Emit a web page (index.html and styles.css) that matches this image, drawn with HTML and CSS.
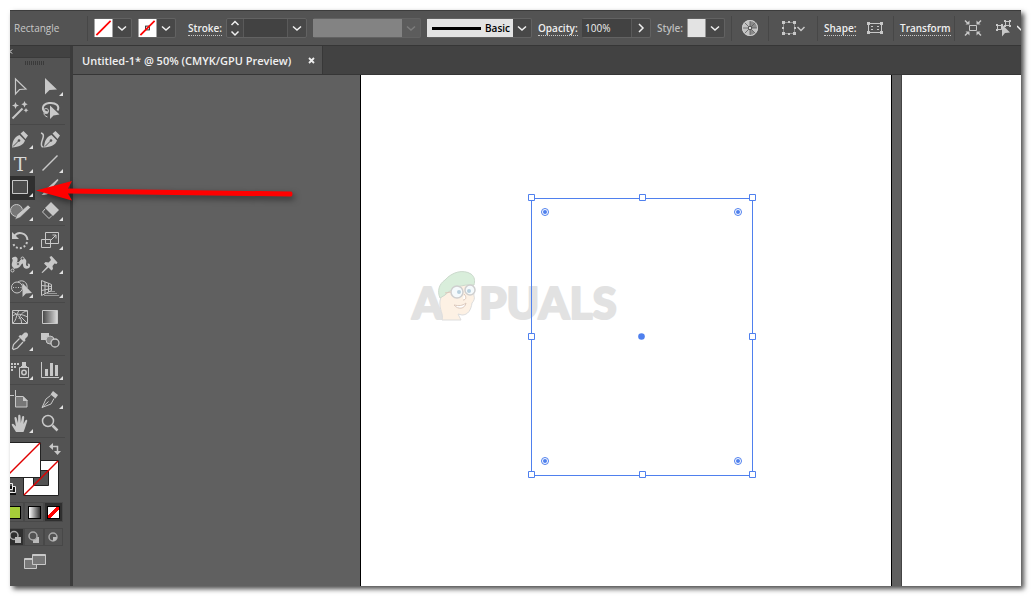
FILE: index.html
```html
<!DOCTYPE html>
<html lang="en">
<head>
<meta charset="UTF-8" />
<meta name="viewport" content="width=device-width, initial-scale=1" />
<title>Untitled-1* @ 50% (CMYK/GPU Preview)</title>
<link rel="stylesheet" href="styles.css">
</head>
<body>

<div class="app">
  <header class="control-bar">
    <span class="object-type">Rectangle</span>
    <span class="sep"></span>

    <button class="combo" aria-label="Fill">
      <svg class="swatch" viewBox="0 0 19 19"><rect width="19" height="19" fill="#fff"/><path d="M2 17L17 2" stroke="#f00" stroke-width="1.8"/></svg>
      <svg class="chev" viewBox="0 0 18 18"><path d="M5 7.5l4 3.5 4-3.5"/></svg>
    </button>
    <button class="combo" aria-label="Stroke color">
      <svg class="swatch" viewBox="0 0 19 19"><rect width="19" height="19" fill="#fff"/><rect x="7.5" y="7.5" width="4" height="4" fill="none" stroke="#222"/><path d="M2 17L17 2" stroke="#f00" stroke-width="1.8"/></svg>
      <svg class="chev" viewBox="0 0 18 18"><path d="M5 7.5l4 3.5 4-3.5"/></svg>
    </button>

    <span class="label-cell stroke-label"><a href="#">Stroke:</a></span>
    <div class="combo stroke-weight">
      <button class="part" aria-label="Step stroke weight"><svg class="chev" viewBox="0 0 18 18"><path d="M4.5 6L8 2.500l3.500 3.500M4.500 12.500l3.500 3.500 3.500-3.500"/></svg></button>
      <input type="text" aria-label="Stroke weight">
      <button class="part" aria-label="Stroke weight list"><svg class="chev" viewBox="0 0 18 18"><path d="M5 7.500l4 3.500 4-3.500"/></svg></button>
    </div>
    <button class="combo profile" aria-label="Width profile" disabled>
      <span class="profile-box"></span>
      <svg class="chev" viewBox="0 0 18 18"><path d="M5 7.500l4 3.500 4-3.500"/></svg>
    </button>
    <button class="combo brush">
      <span class="brush-box"><i></i>Basic</span>
      <svg class="chev" viewBox="0 0 18 18"><path d="M5 7.500l4 3.500 4-3.500"/></svg>
    </button>

    <span class="label-cell opacity-label"><a href="#">Opacity:</a></span>
    <div class="combo opacity">
      <input type="text" value="100%" aria-label="Opacity">
      <button class="part" aria-label="Opacity slider"><svg class="chev" viewBox="0 0 18 18"><path d="M7 5l4 4-4 4"/></svg></button>
    </div>

    <span class="label-cell style-label">Style:</span>
    <button class="combo" aria-label="Graphic style">
      <svg class="swatch" viewBox="0 0 19 19"><rect width="19" height="19" fill="#e3e3e3"/></svg>
      <svg class="chev" viewBox="0 0 18 18"><path d="M5 7.500l4 3.500 4-3.500"/></svg>
    </button>
    <span class="sep"></span>

    <button class="icon-btn" aria-label="Recolor artwork">
      <svg width="18" height="18" viewBox="0 0 18 18"><circle cx="9" cy="9" r="8" fill="#c2c2c2"/><path d="M9 1a8 8 0 0 1 8 8H9zM9 9v8a8 8 0 0 0 5.700-2.300z" fill="#8b8b8b"/><path d="M9 1v16M1 9h16M3.300 3.300l11.400 11.400M14.700 3.300L3.300 14.700" stroke="#5b5b5b" stroke-width=".8"/><circle cx="9" cy="9" r="7.500" fill="none" stroke="#cfcfcf"/><circle cx="9" cy="9" r="1.700" fill="#ddd" stroke="#555"/></svg>
    </button>
    <span class="sep"></span>
    <button class="icon-btn wide" aria-label="Align to">
      <svg width="26" height="18" viewBox="0 0 26 18" fill="none" stroke="#c8c8c8"><path d="M3.500 3.500h11v11h-11z" stroke-dasharray="1 1"/><path d="M2 2h3v3H2zM8 2h2v2H8zM13 2h3v3h-3zM2 13h3v3H2zM8 14h2v2H8zM13 13h3v3h-3zM2 8h2v2H2zM14 8h2v2h-2z" fill="#c8c8c8" stroke="none"/><path d="M17.500 8l3.500 3.500L24.500 8" stroke-width="1.500"/></svg>
    </button>
    <span class="sep"></span>

    <span class="label-cell shape-label"><a href="#">Shape:</a></span>
    <button class="icon-btn" aria-label="Shape properties">
      <svg width="18" height="16" viewBox="0 0 18 16" fill="none" stroke="#c8c8c8"><path d="M2.500 3.500h13v9h-13z"/><path d="M1 2h3v3H1zM14 2h3v3h-3zM1 11h3v3H1zM14 11h3v3h-3zM5 6h2v1H5zM11 6h2v1h-2zM5 9h2v1H5zM11 9h2v1h-2z" fill="#c8c8c8" stroke="none"/></svg>
    </button>
    <span class="sep"></span>
    <span class="label-cell transform-label"><a href="#">Transform</a></span>
    <span class="sep"></span>
    <button class="icon-btn" aria-label="Isolate selected object">
      <svg width="18" height="18" viewBox="0 0 18 18" fill="none" stroke="#c8c8c8"><path d="M5.500 6.500h7v5h-7z"/><path d="M1 1.500l3 3M17 1.500l-3 3M1 16.500l3-3M17 16.500l-3-3" stroke-width="1.500"/><path d="M1.500 5.500h4V1.500zM16.500 5.500h-4V1.500zM1.500 12.500h4v4zM16.500 12.500h-4v4z" fill="#c8c8c8" stroke="none"/></svg>
    </button>
    <button class="icon-btn" aria-label="Select similar objects">
      <svg width="18" height="18" viewBox="0 0 18 18" fill="none" stroke="#c8c8c8"><path d="M11.500 2.500h4v4h-4zM3.500 6.500h4v4h-4z"/><path d="M10 1h2v2h-2zM15 1h2v2h-2zM15 6h2v2h-2zM10 6h2v2h-2zM2 5h2v2H2zM7 5h2v2H7zM2 10h2v2H2z" fill="#c8c8c8" stroke="none"/><path d="M8 5.500v12l3-3.500 5-.5z" fill="#c8c8c8" stroke="none"/></svg>
    </button>
    <svg class="chev last" viewBox="0 0 18 18"><path d="M0 7l4 4 4-4"/></svg>
  </header>

  <div class="workspace">
    <aside class="tools">
      <div class="tools-head"><svg width="4" height="11" viewBox="0 0 4 11"><path d="M2 3.500L0 5.500l2 2" fill="none" stroke="#eee"/></svg></div>
      <div class="grip"></div>

      <div class="tool-group">
        <button aria-label="Selection"><svg viewBox="0 0 30 24"><path class="ln" d="M10.500 4v15l4-4.500 6.500-.5z" stroke-width="1.200"/></svg></button>
        <button class="more" aria-label="Direct selection"><svg viewBox="0 0 30 24"><path d="M10 3v16.500l4.500-4.500 7.500-.5z"/></svg></button>
        <button aria-label="Magic wand"><svg viewBox="0 0 30 24"><path class="ln thick" d="M7.500 19.500l10-10"/><path d="M10.500 3l1 2.500 2.500 1-2.500 1-1 2.500-1-2.500-2.500-1 2.500-1zM19.500 2l1 2.200 2.200 1-2.200 1-1 2.200-1-2.200-2.200-1 2.200-1zM21 9l.8 1.500 1.700.8-1.700.8-.8 1.700-.8-1.700-1.700-.8 1.700-.8z"/></svg></button>
        <button aria-label="Lasso"><svg viewBox="0 0 30 24"><path class="ln thick" d="M13 13.500c-7-1-7-8 1-9.500 7-.8 11 3 8.500 7.500"/><circle class="ln" cx="11" cy="12" r="2.500"/><path class="ln" d="M9 14c0 2 1 3 3.500 4"/><path d="M15 6.500V20l3.500-3.500 6-1z"/></svg></button>
      </div>

      <div class="tool-group">
        <button class="more" aria-label="Pen"><svg viewBox="0 0 30 24"><path d="M7 19.500C7.500 13 9.500 8.500 14.500 7l5.500 5.500C18.500 17 14 19 7 19.500zM15.500 5.500L18.500 3l4.500 4.500-2.500 3.500z"/><path class="cut" d="M8 18.500l5.500-5.500"/><circle class="hole" cx="14" cy="12.500" r="1.300"/></svg></button>
        <button aria-label="Curvature"><svg viewBox="0 0 30 24"><path class="ln" d="M6 5c4 1 2 5 1 8s-1 6 1.500 6" stroke-width="1.500"/><path d="M9 19.500C9.500 13 11.500 8.500 16.500 7l5.500 5.500C20.500 17 16 19 9 19.500zM17.500 5.500l3-2.500L25 7.500 22.500 11z"/><path class="cut" d="M10 18.500l5.500-5.500"/><circle class="hole" cx="16" cy="12.500" r="1.300"/></svg></button>
        <button class="more type" aria-label="Type">T</button>
        <button class="more" aria-label="Line segment"><svg viewBox="0 0 30 24"><path class="ln" d="M7.500 18.500l15-15" stroke-width="1.500"/></svg></button>
        <button class="more active" aria-label="Rectangle"><svg viewBox="0 0 30 24"><path class="ln" d="M7.500 4.500h15v13h-15z" fill="#4b4b4b"/></svg></button>
        <button class="more" aria-label="Paintbrush"><svg viewBox="0 0 30 24"><path d="M22.500 3l1 1-8.500 10.500-2.500-2.500zM12 13l2.500 2.500c-1 3-4 3.500-8 3.500 3-1.500 2-5 5.500-6z"/></svg></button>
        <button class="more" aria-label="Shaper"><svg viewBox="0 0 30 24"><circle class="ln" cx="11.500" cy="10.500" r="6" fill="#777"/><path d="M23 5l2.500 2.500L15 17.500 10 19.500l2-5z" stroke="#535353" stroke-width=".5"/></svg></button>
        <button class="more" aria-label="Eraser"><svg viewBox="0 0 30 24"><path d="M16 2l8 8-6 6-8-8z"/><path class="ln" d="M10 9l-2.500 3 6.500 6.500 3-3"/></svg></button>
      </div>

      <div class="tool-group">
        <button class="more" aria-label="Rotate"><svg viewBox="0 0 30 24"><path class="ln thick" d="M9 7.500c4-6 13-3.500 13.500 3.500"/><path class="ln thick" d="M22 13c-2 8-12 8-14 1" stroke-dasharray="2 2"/><path d="M7 3v7h7z"/></svg></button>
        <button class="more" aria-label="Scale"><svg viewBox="0 0 30 24"><path class="ln" d="M10.500 3.500h13v11h-13zM6.500 10.500h9v8h-9zM16 11l5-5M17.500 6h3.500v3.500"/></svg></button>
        <button class="more" aria-label="Width"><svg viewBox="0 0 30 24"><path d="M7 5c4-3 7 0 5 4-1 2 1 3 2 1 1-4 5-6 7-3 1 2-1 5 1 6 2 0 1-2 0-2 3-2 4 2 2 4-3 2-6 0-6-3 0-2-1-2-2 0-2 4-7 5-9 1-1-3 2-6 0-7z"/><path class="ln" d="M7.500 17.500L17 6"/><circle class="ln hole" cx="7.500" cy="17.500" r="1.500"/><circle class="ln hole" cx="17.500" cy="5.500" r="1.500"/><circle class="ln hole" cx="13" cy="11" r="1.500"/></svg></button>
        <button class="more" aria-label="Puppet warp"><svg viewBox="0 0 30 24"><path d="M14.500 4l2-1 6 6.500-1 1.500-2-.5-2 2.500.5 3-1.500 1.500-3-3-6 5.500-1-.5 5.500-6-3-3 1.500-1.500 3 .5 2.500-2.500z"/></svg></button>
        <button class="more" aria-label="Shape builder"><svg viewBox="0 0 30 24"><circle class="ln" cx="12" cy="10.500" r="5.500"/><path class="ln" d="M13 5c4-3 10 0 9 6"/><path class="ln" d="M8 10.500h9" stroke-dasharray="1 1.500"/><path d="M17.500 6v14l3.500-3.500 6-.5z"/></svg></button>
        <button class="more" aria-label="Perspective grid"><svg viewBox="0 0 30 24"><path class="ln" d="M6.500 3.500v15M6.500 3.500l10 4v6l-10 5M10 5v12M13.500 6.500v8.500M6.500 8.500l10 1M6.500 13.500l10-2"/><path d="M14 14h6v1h-6zM12 16h10v1H12zM9 18h15v1H9z" opacity=".6"/></svg></button>
      </div>

      <div class="tool-group">
        <button aria-label="Mesh"><svg viewBox="0 0 30 24"><path class="ln" d="M7.500 4.500h15v13h-15zM7.500 10c4-3 9-2 15 1M8 6c4 2 9 6 8.500 11M14 4.500c-3 4-2 9-6 12.500M22 5c-5 1-7 4-8 8M16 11l6 6"/></svg></button>
        <button aria-label="Gradient"><svg viewBox="0 0 30 24"><defs><linearGradient id="gt"><stop offset="0" stop-color="#444"/><stop offset="1" stop-color="#ddd"/></linearGradient></defs><path class="ln" d="M7.500 4.500h15v13h-15z" fill="url(#gt)"/></svg></button>
        <button class="more" aria-label="Eyedropper"><svg viewBox="0 0 30 24"><path d="M19 3c3-1.500 5 1 3.500 3.500L20 9l.5 1.500-1.500 1.500-5.500-5.500L15 5l1.500.5z"/><path class="ln" d="M14.500 8.500l-6 6-1 4 1 1 4-1.500 5.500-6" stroke-width="1.200"/></svg></button>
        <button aria-label="Blend"><svg viewBox="0 0 30 24"><path d="M6 3h8v7H6z"/><circle class="ln" cx="15" cy="10" r="4" fill="#888"/><circle class="ln" cx="20" cy="13" r="4" fill="#535353" stroke-width="1.300"/></svg></button>
      </div>

      <div class="tool-group">
        <button class="more" aria-label="Symbol sprayer"><svg viewBox="0 0 30 24"><path d="M6 4h2v2H6zM9 4h2v2H9zM12 4h2v2h-2zM6 7h2v2H6zM9 7h2v2H9zM6 10h2v2H6zM17 3h4v4h-4z"/><path class="ln" d="M14.500 8.500h9v10h-9zM16 7.500h6"/><circle class="ln" cx="19" cy="13.500" r="2.200" stroke-width="1.500"/></svg></button>
        <button class="more" aria-label="Column graph"><svg viewBox="0 0 30 24"><path class="ln" d="M6.500 3v15.500H24"/><path d="M10 10h3v7h-3zM15 4h3v13h-3zM20 6h3v11h-3z"/></svg></button>
      </div>

      <div class="tool-group">
        <button aria-label="Artboard"><svg viewBox="0 0 30 24"><path class="ln" d="M10.500 2v6M4 7.500h5"/><path class="ln" d="M10.500 8.500h7.500l4 4v6.500H10.500z" fill="#777"/><path d="M18 8v5h5z"/></svg></button>
        <button class="more" aria-label="Slice"><svg viewBox="0 0 30 24"><path d="M18 3l5 4-2.500 3.500-5-4z"/><path class="ln" d="M15.500 7.500L11 11l-4 8.500 9-3.500 3-5.500M7 19.500l6.500-6"/></svg></button>
        <button class="more" aria-label="Hand"><svg viewBox="0 0 30 24"><path d="M11 20l-4-6.500c-1-1.500 1-2.500 2-1l2 2-1.500-8c-.2-1.800 1.800-2 2.200-.3L13 11l.2-7c0-1.700 2.200-1.700 2.300 0l.3 7 1.200-6c.4-1.600 2.300-1.200 2.200.4L18.500 12l1.800-3.500c.8-1.200 2.300-.6 1.900.8L20 16l-1.500 4z"/></svg></button>
        <button aria-label="Zoom"><svg viewBox="0 0 30 24"><circle class="ln" cx="13" cy="9" r="5.500" stroke-width="1.500"/><path class="ln" d="M17.500 13.500l5 5" stroke-width="2.500"/></svg></button>
      </div>

      <div class="paint">
        <svg width="60" height="60" viewBox="0 0 60 60" role="img" aria-label="Fill and stroke">
          <path d="M13.500 19.500h35v35h-35zM23.500 29.500h15v15h-15z" fill="#fff" stroke="#222" fill-rule="evenodd"/>
          <path d="M14 54l34-34" stroke="#e00000" stroke-width="1.500"/>
          <path d="M-4.500 1.500h35v35h-35z" fill="#fff" stroke="#222"/>
          <path d="M-4 36l34-34" stroke="#e00000" stroke-width="1.500"/>
          <path d="M42 5.500h5.500V11" fill="none" stroke="#c8c8c8" stroke-width="1.500"/>
          <path d="M43 2v7l-4-3.500zM44 10h7l-3.500 4z" fill="#c8c8c8"/>
          <path d="M0 46.500h4.500v6H-1" fill="none" stroke="#111" stroke-width="3"/>
          <path d="M-2 42.500h4.500v6H-2M2 45.500h3.500v6H-1" fill="none" stroke="#eee"/>
        </svg>
      </div>
      <div class="modes color-modes">
        <button aria-label="Color"><i class="chip lime"></i></button>
        <button aria-label="Gradient"><i class="chip fade"></i></button>
        <button class="active" aria-label="None"><i class="chip none"></i></button>
      </div>
      <div class="modes draw-modes">
        <button class="active" aria-label="Draw normal"><svg viewBox="0 0 18 16"><circle cx="8" cy="6.500" r="4" fill="none" stroke="#aaa" stroke-width="1.500"/><path d="M9 8h6v6H9z" fill="#bbb"/></svg></button>
        <button aria-label="Draw behind"><svg viewBox="0 0 18 16"><path d="M8 8h6v6H8z" fill="#bbb"/><circle cx="8" cy="7" r="4" fill="#535353" stroke="#aaa" stroke-width="1.500"/></svg></button>
        <button aria-label="Draw inside"><svg viewBox="0 0 18 16"><circle cx="8" cy="8" r="4" fill="none" stroke="#aaa" stroke-width="1.500"/><path d="M8 8h4c0 2-1 4-4 4z" fill="#bbb"/></svg></button>
      </div>
      <button class="screen-mode" aria-label="Change screen mode">
        <svg width="24" height="18" viewBox="0 0 24 18" fill="#777" stroke="#c8c8c8"><path d="M1.500 5.500h12v10h-12z"/><path d="M9.500 1.500h13v10h-13z"/><path d="M9 2.500h14M1 6.500h8"/></svg>
      </button>
    </aside>

    <main class="document">
      <nav class="tabs">
        <a class="tab" href="#">Untitled-1* @ 50% (CMYK/GPU Preview)
          <svg width="7" height="7" viewBox="0 0 7 7"><path d="M1 1l5 5M6 1L1 6" stroke="#eee" stroke-width="1.800"/></svg>
        </a>
      </nav>
      <div class="canvas">
        <div class="artboard first">
          <svg class="watermark" width="220" height="64" viewBox="0 0 220 64">
            <g class="wm-text"><text x="7" y="54">A</text><text x="74" y="54">PUALS</text></g>
            <path d="M37 55c2-6-3-10-2-19l3-12c8-8 24-9 30-6l1 13c1 2 0 5-2 7-1 7-4 12-10 12l-4-1 3 6z" fill="#fdf1e4" stroke="#ddd"/>
            <path d="M35 33c-3-7-1-14 5-18C47 7 58 4 66 9c4 3 4 7 3 11-12-1-22 3-29 10z" fill="#d9eedb" stroke="#ccdacd"/>
            <circle cx="52" cy="27" r="6" fill="#f5fafc" stroke="#cfcfcf" stroke-width="1.500"/><circle cx="65" cy="25" r="5" fill="#f5fafc" stroke="#cfcfcf" stroke-width="1.500"/>
            <circle cx="54" cy="27" r="2" fill="#b9d0de"/><circle cx="64" cy="26" r="2" fill="#b9d0de"/>
            <path d="M40 28l6-1M59 29c3 3 2 6-1 6M49 40c5 1 8 1 12-2-1 6-8 7-12 2" fill="#fff" stroke="#dcc9bd"/>
          </svg>
          <svg class="selection" width="228" height="285" viewBox="0 0 228 285">
            <path d="M3.500 4.500h221v277h-221z"/>
            <g fill="#fff">
              <path d="M.5.500h6v6h-6zM111.500.500h6v6h-6zM221.500.500h6v6h-6zM.5 139.500h6v6h-6zM221.500 139.500h6v6h-6zM.5 277.500h6v6h-6zM111.500 277.500h6v6h-6zM221.500 277.500h6v6h-6z"/>
            </g>
            <g>
              <circle cx="17" cy="18" r="3.500"/><circle cx="210" cy="18" r="3.500"/><circle cx="17" cy="267" r="3.500"/><circle cx="210" cy="267" r="3.500"/>
            </g>
            <g class="dot">
              <circle cx="17" cy="18" r="2"/><circle cx="210" cy="18" r="2"/><circle cx="17" cy="267" r="2"/><circle cx="210" cy="267" r="2"/>
              <circle cx="113.500" cy="142.500" r="3.300"/>
            </g>
          </svg>
        </div>
        <div class="artboard second"></div>
      </div>
    </main>
  </div>

  <svg class="pointer" width="270" height="32" viewBox="0 0 270 32">
    <path d="M6 15.500L42 6l-4 7.500 223 3c2 .5 2 4.500 0 5L38 18.500l4 7z" fill="#f00"/>
  </svg>
</div>

</body>
</html>
```
FILE: styles.css
```css
* {
  box-sizing: border-box;
}
body {
  margin: 0;
  padding: 10px 11px 11px 10px;
  height: 100vh;
  background: #fff;
  font-family: "Open Sans", "Noto Sans", sans-serif;
  font-size: 10px;
  color: #f0f0f0;
}
button, input {
  font: inherit;
  color: inherit;
  border: none;
  background: none;
  padding: 0;
  margin: 0;
  min-width: 0;
}
a {
  color: inherit;
  text-decoration: none;
}
svg {
  display: block;
  flex: none;
}
.app {
  position: relative;
  height: 100%;
  display: flex;
  flex-direction: column;
  background: #535353;
  box-shadow: 3px 3px 5px rgba(0,0,0,0.7);
}

/* top control bar */
.control-bar {
  display: flex;
  align-items: center;
  gap: 6px;
  height: 36px;
  padding-left: 4px;
  border-top: 1px solid #3c3c3c;
  border-bottom: 1px solid #363636;
  overflow: hidden;
}
.control-bar > * {
  flex: none;
}
.object-type {
  width: 73px;
  margin-right: -6px;
  color: #c8c8c8;
}
.sep {
  width: 1px;
  height: 25px;
  background: #474747;
}
.combo {
  display: flex;
  height: 20px;
  border: 1px solid #626262;
  border-left: none;
  border-radius: 2px;
  background: #484848;
}
.swatch {
  width: 19px;
  height: 18px;
}
.chev {
  width: 18px;
  height: 18px;
  fill: none;
  stroke: #f0f0f0;
  stroke-width: 1.5;
}
.chev.last {
  margin-left: -4px;
}
.combo input {
  flex: 1;
  background: #424242;
  border-right: 1px solid #5a5a5a;
}
.part {
  flex: none;
}
.stroke-weight {
  width: 81px;
  border-left: 1px solid #626262;
}
.stroke-weight .part:first-child {
  width: 16px;
  overflow: hidden;
}
.stroke-weight input {
  border-left: 1px solid #5a5a5a;
}
.profile {
  width: 108px;
  background: #5c5c5c;
}
.profile-box {
  flex: 1;
  background: #838383;
}
.profile .chev {
  stroke: #7c7c7c;
}
.brush {
  width: 105px;
}
.brush-box {
  flex: 1;
  display: flex;
  align-items: center;
  gap: 4px;
  padding-left: 5px;
  background: #e3e3e3;
  color: #000;
  font-weight: 600;
}
.brush-box i {
  width: 49px;
  height: 3px;
  background: #000;
}
.opacity {
  width: 69px;
}
.opacity input {
  padding-left: 3px;
}
.label-cell {
  font-weight: 600;
  white-space: nowrap;
}
.label-cell a {
  display: inline-block;
  line-height: 13px;
  border-bottom: 1px dotted #c8c8c8;
}
.stroke-label {
  width: 38px;
  padding-left: 6px;
}
.opacity-label {
  width: 38px;
}
.style-label {
  width: 24px;
  color: #bdbdbd;
}
.shape-label {
  width: 33px;
}
.transform-label {
  width: 48px;
}
.icon-btn {
  width: 24px;
  display: flex;
  justify-content: center;
}
.icon-btn.wide {
  width: 36px;
}

.workspace {
  flex: 1;
  display: flex;
  min-height: 0;
}

/* tools panel */
.tools {
  width: 63px;
  flex: none;
  overflow: hidden;
  border-right: 3px solid #3b3b3b;
}
.tools-head {
  height: 12px;
  background: #424242;
  border-bottom: 1px solid #3a3a3a;
}
.grip {
  width: 20px;
  height: 4px;
  margin: 3px 0 10px 15px;
  background: repeating-linear-gradient(90deg, #3a3a3a 0 1px, transparent 1px 2px);
}
.tool-group {
  display: grid;
  grid-template-columns: 30px 30px;
  grid-auto-rows: 24px;
  width: 60px;
  margin-left: -5px;
  padding-bottom: 1px;
  margin-bottom: 3px;
  border-bottom: 1px solid #484848;
}
.tool-group button {
  position: relative;
}
.tool-group svg {
  width: 30px;
  height: 24px;
  fill: #c8c8c8;
}
.tool-group .ln {
  stroke: #c8c8c8;
}
.tool-group .ln:not([fill]) {
  fill: none;
}
.tool-group .thick {
  stroke-width: 2;
}
.tool-group .cut {
  stroke: #535353;
}
.tool-group .hole,
.tool-group .ln.hole:not([fill]) {
  fill: #535353;
}
.tool-group .active {
  background: #2f2f2f;
}
.tool-group .type {
  font-family: "DejaVu Serif", serif;
  font-size: 19px;
  line-height: 22px;
  color: #d8d8d8;
}
.more::after {
  content: "";
  position: absolute;
  right: 2px;
  bottom: 3px;
  border: 2px solid transparent;
  border-right-color: #e0e0e0;
  border-bottom-color: #e0e0e0;
}
.paint {
  height: 61px;
}
.modes {
  display: grid;
  grid-template-columns: 19px 20px 19px;
  width: 58px;
  margin-left: -5px;
}
.modes button {
  display: flex;
  align-items: center;
  justify-content: center;
  border: 1px solid #484848;
}
.modes .active {
  background: #2f2f2f;
}
.color-modes {
  grid-auto-rows: 20px;
}
.draw-modes {
  grid-auto-rows: 18px;
  margin-top: 6px;
}
.draw-modes svg {
  width: 18px;
  height: 16px;
}
.chip {
  width: 13px;
  height: 13px;
  border: 1px solid #000;
}
.lime {
  background: #a6ce39;
}
.fade {
  background: linear-gradient(90deg, #fff, #333);
}
.none {
  background: linear-gradient(135deg, #fff 40%, #f00 40% 60%, #fff 60%);
}
.screen-mode {
  display: block;
  margin: 7px 0 0 13px;
}

/* document window */
.document {
  flex: 1;
  min-width: 0;
  display: flex;
  flex-direction: column;
}
.tabs {
  display: flex;
  height: 29px;
  background: #424242;
  border-bottom: 1px solid #363636;
}
.tab {
  display: flex;
  align-items: center;
  justify-content: space-between;
  width: 250px;
  padding: 0 7px 0 9px;
  background: #535353;
  border-right: 1px solid #383838;
  font-size: 11px;
  font-weight: 600;
  white-space: nowrap;
}
.canvas {
  flex: 1;
  display: grid;
  grid-template-columns: 1fr 120px;
  column-gap: 9px;
  padding-left: 287px;
  background: #606060;
  overflow: hidden;
}
.artboard {
  position: relative;
  background: #fff;
  border-left: 1px solid #000;
}
.first {
  border-right: 1px solid #000;
}
.second {
  border-left-color: #444;
}
.watermark {
  position: absolute;
  left: 44px;
  top: 190px;
}
.wm-text {
  font-family: Lato, sans-serif;
  font-weight: 900;
  font-size: 44px;
  fill: #e2e2e2;
  stroke: #e2e2e2;
  stroke-width: 2;
  stroke-linejoin: round;
}
.selection {
  position: absolute;
  left: 167px;
  top: 119px;
  fill: none;
  stroke: #4f80ee;
}
.selection .dot {
  fill: #4f80ee;
  stroke: none;
}

/* red arrow pointing at the rectangle tool */
.pointer {
  position: absolute;
  left: 20px;
  top: 165px;
  filter: drop-shadow(2px 3px 3px rgba(0,0,0,0.5));
}
```
